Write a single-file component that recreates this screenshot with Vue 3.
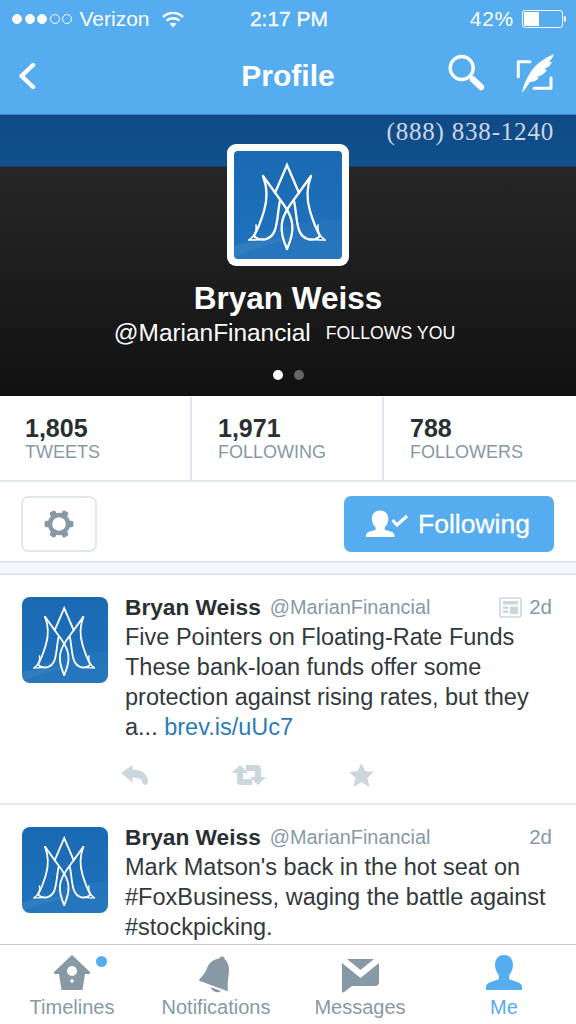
<script setup>
const stats = [
  { value: "1,805", label: "TWEETS" },
  { value: "1,971", label: "FOLLOWING" },
  { value: "788", label: "FOLLOWERS" },
];

const tweets = [
  {
    id: 1,
    hasCard: true,
    lines: [
      "Five Pointers on Floating-Rate Funds",
      "These bank-loan funds offer some",
      "protection against rising rates, but they",
    ],
    last: "a... ",
    link: "brev.is/uUc7",
  },
  {
    id: 2,
    hasCard: false,
    lines: [
      "Mark Matson's back in the hot seat on",
      "#FoxBusiness, waging the battle against",
      "#stockpicking.",
    ],
  },
];

const gearTeeth = [30, 90, 150, 210, 270, 330];
</script>

<template>
  <div class="screen">
    <svg class="defs" width="0" height="0" aria-hidden="true">
      <symbol id="logo" viewBox="0 0 108 108">
        <path d="M0 96 C30 78 70 70 108 68 L108 108 L0 108Z" fill="#fff" opacity="0.035" />
        <path d="M0 106 C30 94 60 86 90 82 L0 94Z" fill="#fff" opacity="0.05" />
        <g fill="none" stroke="#fff" stroke-width="2.3" stroke-linecap="round">
          <path d="M41 42 L53 14 L65 42" />
          <path d="M29 25 L50 54 C59 67 62 78 53 98" />
          <path d="M77 25 L56 54 C47 67 44 78 53 98" />
          <path d="M29 25 C34 38 33 50 30 60 C27 70 24 78 20 85 C26 91 37 90 41 79 C44 70 44 58 46 50" />
          <path d="M15 89 C20 89 26 89 29 88" stroke-width="1.7" />
          <path d="M22 74 C23 80 21 85 15 89" stroke-width="1.7" />
          <g transform="matrix(-1 0 0 1 106 0)">
            <path d="M29 25 C34 38 33 50 30 60 C27 70 24 78 20 85 C26 91 37 90 41 79 C44 70 44 58 46 50" />
            <path d="M15 89 C20 89 26 89 29 88" stroke-width="1.7" />
            <path d="M22 74 C23 80 21 85 15 89" stroke-width="1.7" />
          </g>
        </g>
      </symbol>
    </svg>

    <header class="top">
      <div class="status">
        <div class="status-left">
          <span class="sig on"></span><span class="sig on"></span><span class="sig on"></span>
          <span class="sig"></span><span class="sig"></span>
          <span class="carrier">Verizon</span>
          <svg class="wifi" width="22" height="17" viewBox="0 0 22 17" fill="none" stroke="#fff" stroke-width="2.4">
            <path d="M1 6 C7 0.5 15 0.5 21 6" />
            <path d="M4.5 9.5 C8 6.5 14 6.5 17.5 9.5" />
            <path d="M11 16.5 L7.6 12.8 C9.6 11.3 12.4 11.3 14.4 12.8Z" fill="#fff" stroke="none" />
          </svg>
        </div>
        <div class="clock">2:17 PM</div>
        <div class="status-right">
          <span class="percent">42%</span>
          <span class="battery"><span class="charge"></span></span>
          <span class="nub"></span>
        </div>
      </div>
      <nav class="nav">
        <svg width="18" height="28" viewBox="0 0 18 28" fill="none" stroke="#fff" stroke-width="4.4" stroke-linecap="round" stroke-linejoin="round">
          <path d="M15 3 L3.5 14 L15 25" />
        </svg>
        <h1 class="title">Profile</h1>
        <div class="nav-actions">
          <svg width="40" height="40" viewBox="0 0 40 40" fill="none" stroke="#fff">
            <circle cx="15.7" cy="16" r="11.5" stroke-width="3.4" />
            <path d="M27 27.5 L35 35" stroke-width="6.4" stroke-linecap="round" />
          </svg>
          <svg width="44" height="48" viewBox="0 0 44 48" fill="none" stroke="#fff" stroke-width="3" stroke-linecap="round" stroke-linejoin="round">
            <path d="M4.3 24.7 L4.3 9.7 L16 9.7" />
            <path d="M20 36.3 L37 36.3 L37 25.7" />
            <path d="M8 41 C9 34 12 27 16 21 C21 13 30 6 40 2 C39 5 37 8 35 10 L38 10 C36 14 33 16 30 17 L33 18 C30 22 27 24 23 25 L25 26 C22 29 19 30 16 30 C14 33 11 37 8 41Z" fill="#fff" stroke="none" />
          </svg>
        </div>
      </nav>
    </header>

    <section class="banner">
      <div class="phone">(888) 838-1240</div>
      <div class="frame">
        <div class="avatar big">
          <svg width="108" height="108"><use href="#logo" /></svg>
        </div>
      </div>
      <div class="banner-name">Bryan Weiss</div>
      <div class="banner-handle">
        <span class="at">@MarianFinancial</span>
        <span class="follows">FOLLOWS YOU</span>
      </div>
      <div class="pager"><span class="dot active"></span><span class="dot"></span></div>
    </section>

    <section class="stats">
      <div v-for="s in stats" :key="s.label" class="stat">
        <div class="stat-value">{{ s.value }}</div>
        <div class="stat-label">{{ s.label }}</div>
      </div>
    </section>

    <section class="actions">
      <button class="gear-btn">
        <svg width="30" height="30" viewBox="0 0 32 32">
          <rect v-for="a in gearTeeth" :key="a" x="12.6" y="0.6" width="6.8" height="8" rx="1.8" fill="#8899a6" :transform="`rotate(${a} 16 16)`" />
          <circle cx="16" cy="16" r="9.6" fill="none" stroke="#8899a6" stroke-width="4.6" />
        </svg>
      </button>
      <button class="follow-btn">
        <svg width="42" height="28" viewBox="0 0 42 28">
          <path d="M14 0.5 C8.5 0.5 5.8 4.4 5.8 9 C5.8 12.5 7.8 15.8 9.6 17.6 L9.6 19.5 C5 21.5 0 21.5 0 25.5 L0 27 L28.5 27 L28.5 25.5 C28.5 21.5 23.5 21.5 18.6 19.5 L18.6 17.6 C20.4 15.8 22.4 12.5 22.4 9 C22.4 4.4 19.5 0.5 14 0.5Z" fill="#fff" />
          <path d="M26.5 10 L31 15 L41 6" fill="none" stroke="#fff" stroke-width="3.2" />
        </svg>
        <span>Following</span>
      </button>
    </section>

    <div class="spacer"></div>

    <main class="feed">
      <article v-for="t in tweets" :key="t.id" class="tweet">
        <div class="avatar small">
          <svg width="86" height="86"><use href="#logo" /></svg>
        </div>
        <div class="tweet-body">
          <div class="meta">
            <span class="name">Bryan Weiss</span>
            <span class="handle">@MarianFinancial</span>
            <svg v-if="t.hasCard" class="card-icon" width="23" height="21" viewBox="0 0 23 21" fill="#ccd6dd">
              <rect x="1" y="1" width="21" height="19" rx="1.5" fill="none" stroke="#ccd6dd" stroke-width="1.6" />
              <rect x="4" y="4" width="15" height="3.5" />
              <rect x="4" y="9.5" width="5.5" height="2.4" />
              <rect x="4" y="13.5" width="5.5" height="2.4" />
              <rect x="11" y="9.5" width="8" height="7.5" />
            </svg>
            <span class="time">2d</span>
          </div>
          <div class="text">
            <div v-for="line in t.lines" :key="line">{{ line }}</div>
            <div v-if="t.link">{{ t.last }}<a class="link">{{ t.link }}</a></div>
          </div>
          <div class="tweet-actions">
            <svg width="27" height="20" viewBox="0 0 27 20" fill="#ccd6dd">
              <path d="M0.8 8 L11 0.8 L11 5 C20 5 26.5 9 26.5 16.5 Q26.5 19.5 24.3 19.5 Q22.3 19.5 21.8 17 C21 13.5 17 12 11 12 L11 16.8 Z" stroke="#ccd6dd" stroke-linejoin="round" />
            </svg>
            <svg width="34" height="20" viewBox="0 0 34 20" fill="#ccd6dd">
              <path d="M8 0 L16 8 L11 8 L11 14 L20 14 L20 20 L9 20 Q5 20 5 16 L5 8 L0 8Z" />
              <path d="M8 0 L16 8 L11 8 L11 14 L20 14 L20 20 L9 20 Q5 20 5 16 L5 8 L0 8Z" transform="rotate(180 17 10)" />
            </svg>
            <svg class="star" width="25" height="24" viewBox="0 0 25 24" fill="#ccd6dd">
              <path d="M12.5 1 L15.8 8.6 L24 9.4 L17.8 14.8 L19.7 23 L12.5 18.6 L5.3 23 L7.2 14.8 L1 9.4 L9.2 8.6Z" stroke="#ccd6dd" stroke-linejoin="round" />
            </svg>
          </div>
        </div>
      </article>
    </main>

    <footer class="tabs">
      <div class="tab">
        <span class="tab-icon">
          <svg width="44" height="38" viewBox="0 0 44 38">
            <path d="M22 0 L40 17 Q40.5 19 38 19 L35 19 L32.5 35 L11.5 35 L9 19 L6 19 Q3.5 19 4 17Z" fill="#8899a6" />
            <circle cx="22" cy="16" r="5" fill="#fff" />
            <circle cx="22" cy="26" r="1.8" fill="#fff" />
          </svg>
          <span class="badge"></span>
        </span>
        <span class="tab-label">Timelines</span>
      </div>
      <div class="tab">
        <span class="tab-icon">
          <svg width="44" height="38" viewBox="0 0 44 38" fill="#8899a6">
            <path d="M28 1.5 C30 1.5 31 3 30.5 4 C33 6 35 10 35 14 C35 20 33 28 34 35 Q34 36 33 36 L6 26 Q4 25 5.5 24 C9 21 12 16 13.5 12 C15 8 20 4 25.5 3.5 C26 2 27 1.5 28 1.5Z" />
            <path d="M16.5 32 L27 36 C24 38.5 18 37 16.5 32Z" />
          </svg>
        </span>
        <span class="tab-label">Notifications</span>
      </div>
      <div class="tab">
        <span class="tab-icon">
          <svg width="44" height="38" viewBox="0 0 44 38" fill="#8899a6">
            <path d="M9 4 L36 4 L22.5 15Z" />
            <path d="M4 8 L22.5 23 L41 8 L41 27 Q41 31 37 31 L14 31 L5.5 37.5 Q4 38 4 36Z" />
          </svg>
        </span>
        <span class="tab-label">Messages</span>
      </div>
      <div class="tab current">
        <span class="tab-icon">
          <svg width="44" height="38" viewBox="0 0 44 38">
            <path d="M22 0 C16 0 13 4.5 13 10 C13 14 15 18 17 20.5 L17 24 C11 27 4 27 4 32 L4 35 L40 35 L40 32 C40 27 33 27 27 24 L27 20.5 C29 18 31 14 31 10 C31 4.5 28 0 22 0Z" fill="#55acee" />
          </svg>
        </span>
        <span class="tab-label">Me</span>
      </div>
    </footer>
  </div>
</template>

<style>
html,
body {
  margin: 0;
  background: #fff;
}
</style>

<style scoped>
.screen {
  width: 576px;
  height: 1024px;
  display: flex;
  flex-direction: column;
  overflow: hidden;
  position: relative;
  background: #fff;
  font-family: "Liberation Sans", Arial, sans-serif;
  color: #292f33;
}

.defs {
  position: absolute;
}

.top {
  flex: none;
  background: #55acee;
  border-bottom: 1px solid #3f87c0;
  color: #fff;
}

.status {
  height: 38px;
  display: grid;
  grid-template-columns: 1fr auto 1fr;
  align-items: center;
  font-size: 21px;
  padding: 0 10px 0 12px;
}

.status-left {
  display: flex;
  align-items: center;
  gap: 2.5px;
}

.sig {
  width: 8px;
  height: 8px;
  border: 1px solid #fff;
  border-radius: 50%;
}

.sig.on {
  background: #fff;
}

.carrier {
  margin-left: 5px;
}

.wifi {
  margin-left: 10px;
}

.clock {
  font-size: 21px;
  font-weight: 500;
  -webkit-text-stroke: 0.3px #fff;
}

.status-right {
  display: flex;
  align-items: center;
  justify-content: flex-end;
}

.percent {
  letter-spacing: 0.7px;
}

.battery {
  width: 37px;
  height: 14px;
  margin-left: 8px;
  border: 1px solid #fff;
  border-radius: 3px;
  padding: 1px;
  display: flex;
}

.charge {
  width: 15px;
  background: #fff;
}

.nub {
  width: 2px;
  height: 6px;
  margin-left: 1px;
  background: #fff;
  border-radius: 0 2px 2px 0;
}

.nav {
  height: 76px;
  display: grid;
  grid-template-columns: 1fr auto 1fr;
  align-items: center;
  padding: 0 18px;
}

.title {
  margin: 0;
  font-size: 30px;
  font-weight: 700;
}

.nav-actions {
  display: flex;
  justify-content: flex-end;
  gap: 28px;
}

.nav-actions svg {
  display: block;
}

.banner {
  flex: none;
  height: 281px;
  position: relative;
  display: flex;
  flex-direction: column;
  align-items: center;
  background: linear-gradient(#0f4a86 0, #10518f 51px, #262626 52px, #1f1f1f 140px, #111 281px);
  color: #fff;
}

.phone {
  position: absolute;
  top: 3px;
  right: 22px;
  font-family: "Liberation Serif", serif;
  font-size: 25px;
  line-height: 28px;
  letter-spacing: 0.8px;
  color: #ccd6e2;
}

.frame {
  margin-top: 29px;
  padding: 7px;
  background: #fff;
  border-radius: 9px;
}

.avatar {
  flex: none;
  overflow: hidden;
  background: linear-gradient(#1a6ab3, #1f72bc);
}

.avatar svg {
  display: block;
}

.avatar.big {
  width: 108px;
  height: 108px;
  border-radius: 4px;
}

.avatar.small {
  width: 86px;
  height: 86px;
  margin-top: 2px;
  border-radius: 8px;
}

.banner-name {
  margin-top: 14px;
  font-size: 31.5px;
  line-height: 36px;
  font-weight: 700;
}

.banner-handle {
  margin: 3px 7px 0 0;
  display: flex;
  align-items: center;
  gap: 15px;
  line-height: 28px;
}

.at {
  font-size: 24.4px;
}

.follows {
  font-size: 17.7px;
}

.pager {
  margin-top: 23px;
  display: flex;
  gap: 11px;
}

.dot {
  width: 10px;
  height: 10px;
  border-radius: 50%;
  background: #666;
}

.dot.active {
  background: #fff;
}

.stats {
  flex: none;
  display: grid;
  grid-template-columns: repeat(3, 1fr);
  border-bottom: 2px solid #e1e8ed;
  margin-top: 1px;
}

.stat {
  height: 83px;
  box-sizing: border-box;
  padding: 17px 0 0 25px;
  border-right: 2px solid #e1e8ed;
}

.stat + .stat {
  padding-left: 26px;
}

.stat:last-child {
  border-right: 0;
}

.stat-value {
  font-size: 25px;
  line-height: 28px;
  font-weight: 700;
  color: #292f33;
}

.stat-label {
  font-size: 18px;
  line-height: 20px;
  color: #8899a6;
}

.actions {
  flex: none;
  display: flex;
  justify-content: space-between;
  padding: 14px 22px 9px 21px;
}

button {
  height: 56px;
  margin: 0;
  font-family: inherit;
  display: flex;
  align-items: center;
  box-sizing: border-box;
}

.gear-btn {
  width: 76px;
  justify-content: center;
  padding: 0;
  background: #fff;
  border: 2px solid #e1e8ed;
  border-radius: 7px;
}

.follow-btn {
  width: 210px;
  padding: 0 0 0 22px;
  gap: 10px;
  border: 0;
  border-radius: 7px;
  background: #55acee;
  color: #fff;
  font-size: 26.5px;
  -webkit-text-stroke: 0.3px #fff;
}

.spacer {
  flex: none;
  height: 10px;
  background: #f5f8fa;
  border-top: 2px solid #e1e8ed;
  border-bottom: 2px solid #e1e8ed;
}

.feed {
  flex: 1;
  min-height: 0;
  overflow: hidden;
}

.tweet {
  display: flex;
  gap: 17px;
  padding: 20px 24px 16px 22px;
  border-bottom: 2px solid #e1e8ed;
}

.tweet-body {
  flex: 1;
  min-width: 0;
}

.meta {
  display: flex;
  align-items: center;
  height: 24px;
  margin-bottom: 3px;
}

.name {
  font-size: 22.7px;
  font-weight: 700;
  color: #292f33;
}

.handle {
  margin-left: 9px;
  font-size: 19.9px;
  color: #8899a6;
}

.card-icon {
  margin-left: auto;
}

.time {
  margin-left: auto;
  font-size: 20.5px;
  color: #8899a6;
}

.card-icon + .time {
  margin-left: 7px;
}

.text {
  font-size: 23.5px;
  line-height: 30px;
  color: #33393d;
  white-space: nowrap;
}

.link {
  color: #2b7bb9;
}

.tweet-actions {
  display: flex;
  align-items: center;
  gap: 84px;
  height: 24px;
  margin: 21px 0 0 -4px;
}

.star {
  margin-left: -1px;
}

.tabs {
  flex: none;
  height: 80px;
  box-sizing: border-box;
  display: grid;
  grid-template-columns: repeat(4, 1fr);
  padding-top: 10px;
  border-top: 1px solid #c8ccd0;
  background: #fff;
}

.tab {
  display: flex;
  flex-direction: column;
  align-items: center;
  color: #8899a6;
}

.tab.current {
  color: #55acee;
}

.tab-icon {
  position: relative;
  height: 38px;
  margin-bottom: 2px;
}

.tab-icon svg {
  display: block;
}

.badge {
  position: absolute;
  left: 46px;
  top: 1px;
  width: 11px;
  height: 11px;
  border-radius: 50%;
  background: #55acee;
}

.tab-label {
  font-size: 20px;
  line-height: 24px;
}
</style>
